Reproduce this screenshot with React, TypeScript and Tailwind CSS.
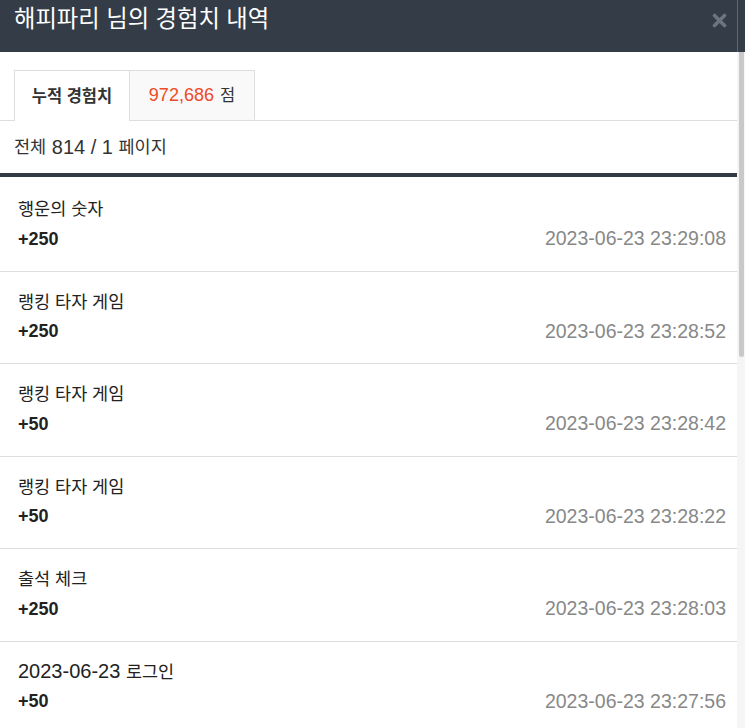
type Row = {
  title: React.ReactNode;
  point: string;
  date: string;
};

const Ko = ({ children }: { children: React.ReactNode }) => (
  <span className="text-[17.5px]">{children}</span>
);

const rows: Row[] = [
  { title: <Ko>행운의 숫자</Ko>, point: '+250', date: '2023-06-23 23:29:08' },
  { title: <Ko>랭킹 타자 게임</Ko>, point: '+250', date: '2023-06-23 23:28:52' },
  { title: <Ko>랭킹 타자 게임</Ko>, point: '+50', date: '2023-06-23 23:28:42' },
  { title: <Ko>랭킹 타자 게임</Ko>, point: '+50', date: '2023-06-23 23:28:22' },
  { title: <Ko>출석 체크</Ko>, point: '+250', date: '2023-06-23 23:28:03' },
  {
    title: (
      <>
        2023-06-23 <Ko>로그인</Ko>
      </>
    ),
    point: '+50',
    date: '2023-06-23 23:27:56',
  },
];

const App = () => {
  return (
    <div className="flex h-[728px] w-[745px] flex-col bg-white font-['Liberation_Sans','Noto_Sans_CJK_KR',sans-serif] text-[#222]">
      {/* header */}
      <header className="flex h-[52px] shrink-0 bg-[#333c47]">
        <div className="flex flex-1 items-start justify-between border-r border-[#5d6670] pl-[14px] pr-[10px] pt-[4px]">
          <h1 className="text-[23.3px] leading-[30px] text-white">
            해피파리 님의 경험치 내역
          </h1>
          <button className="mt-[9px] text-[#6c747e]">
            <svg width="15" height="15" viewBox="0 0 15 15">
              <path
                d="M2.5 2.5 L12.5 12.5 M12.5 2.5 L2.5 12.5"
                stroke="currentColor"
                strokeWidth="3.6"
                strokeLinecap="round"
              />
            </svg>
          </button>
        </div>
        <div className="w-[7px]" />
      </header>

      {/* body */}
      <div className="flex min-h-0 flex-1">
        <section className="min-w-0 flex-1 overflow-hidden">
          <div className="pt-[18px]">
            <div className="flex border-b border-[#dddddd] pl-[14px]">
              <div className="-mb-px flex h-[51px] w-[116px] items-center justify-center border border-b-0 border-[#dddddd] bg-white text-[16.5px] font-bold text-[#333]">
                누적 경험치
              </div>
              <div className="flex h-[50px] w-[125px] items-center justify-center border-y border-r border-t-[#dddddd] border-r-[#dddddd] border-b-transparent bg-[#f9f9f9]">
                <span className="text-[18px] text-[#ef4a23]">972,686</span>
                <span className="ml-[6px] text-[16.5px] text-[#333]">점</span>
              </div>
            </div>
          </div>

          <div className="flex h-[52px] items-center pl-[14px] text-[20px] text-[#333]">
            <Ko>전체</Ko>&nbsp;814 / 1&nbsp;<Ko>페이지</Ko>
          </div>

          <ul className="border-t-4 border-[#333a44]">
            {rows.map((row, i) => (
              <li
                key={i}
                className="h-[92.5px] border-b border-[#dddddd] pl-[18px] pr-[11px] pt-[17px] text-[20px] first:h-[94.5px] first:pt-[19px] last:border-b-0"
              >
                <div className="h-[24px] leading-[24px] text-[#222]">{row.title}</div>
                <div className="mt-[7px] flex h-[24px] items-center justify-between">
                  <span className="text-[18px] font-bold text-[#222]">{row.point}</span>
                  <span className="text-[19.5px] text-[#888]">{row.date}</span>
                </div>
              </li>
            ))}
          </ul>
        </section>

        {/* scrollbar */}
        <div className="w-[8px] shrink-0 bg-[#f5f5f5] px-[1.5px]">
          <div className="h-[305px] rounded-b-full rounded-t-[2px] bg-[#c9c9c9]" />
        </div>
      </div>
    </div>
  );
};

export default App;
